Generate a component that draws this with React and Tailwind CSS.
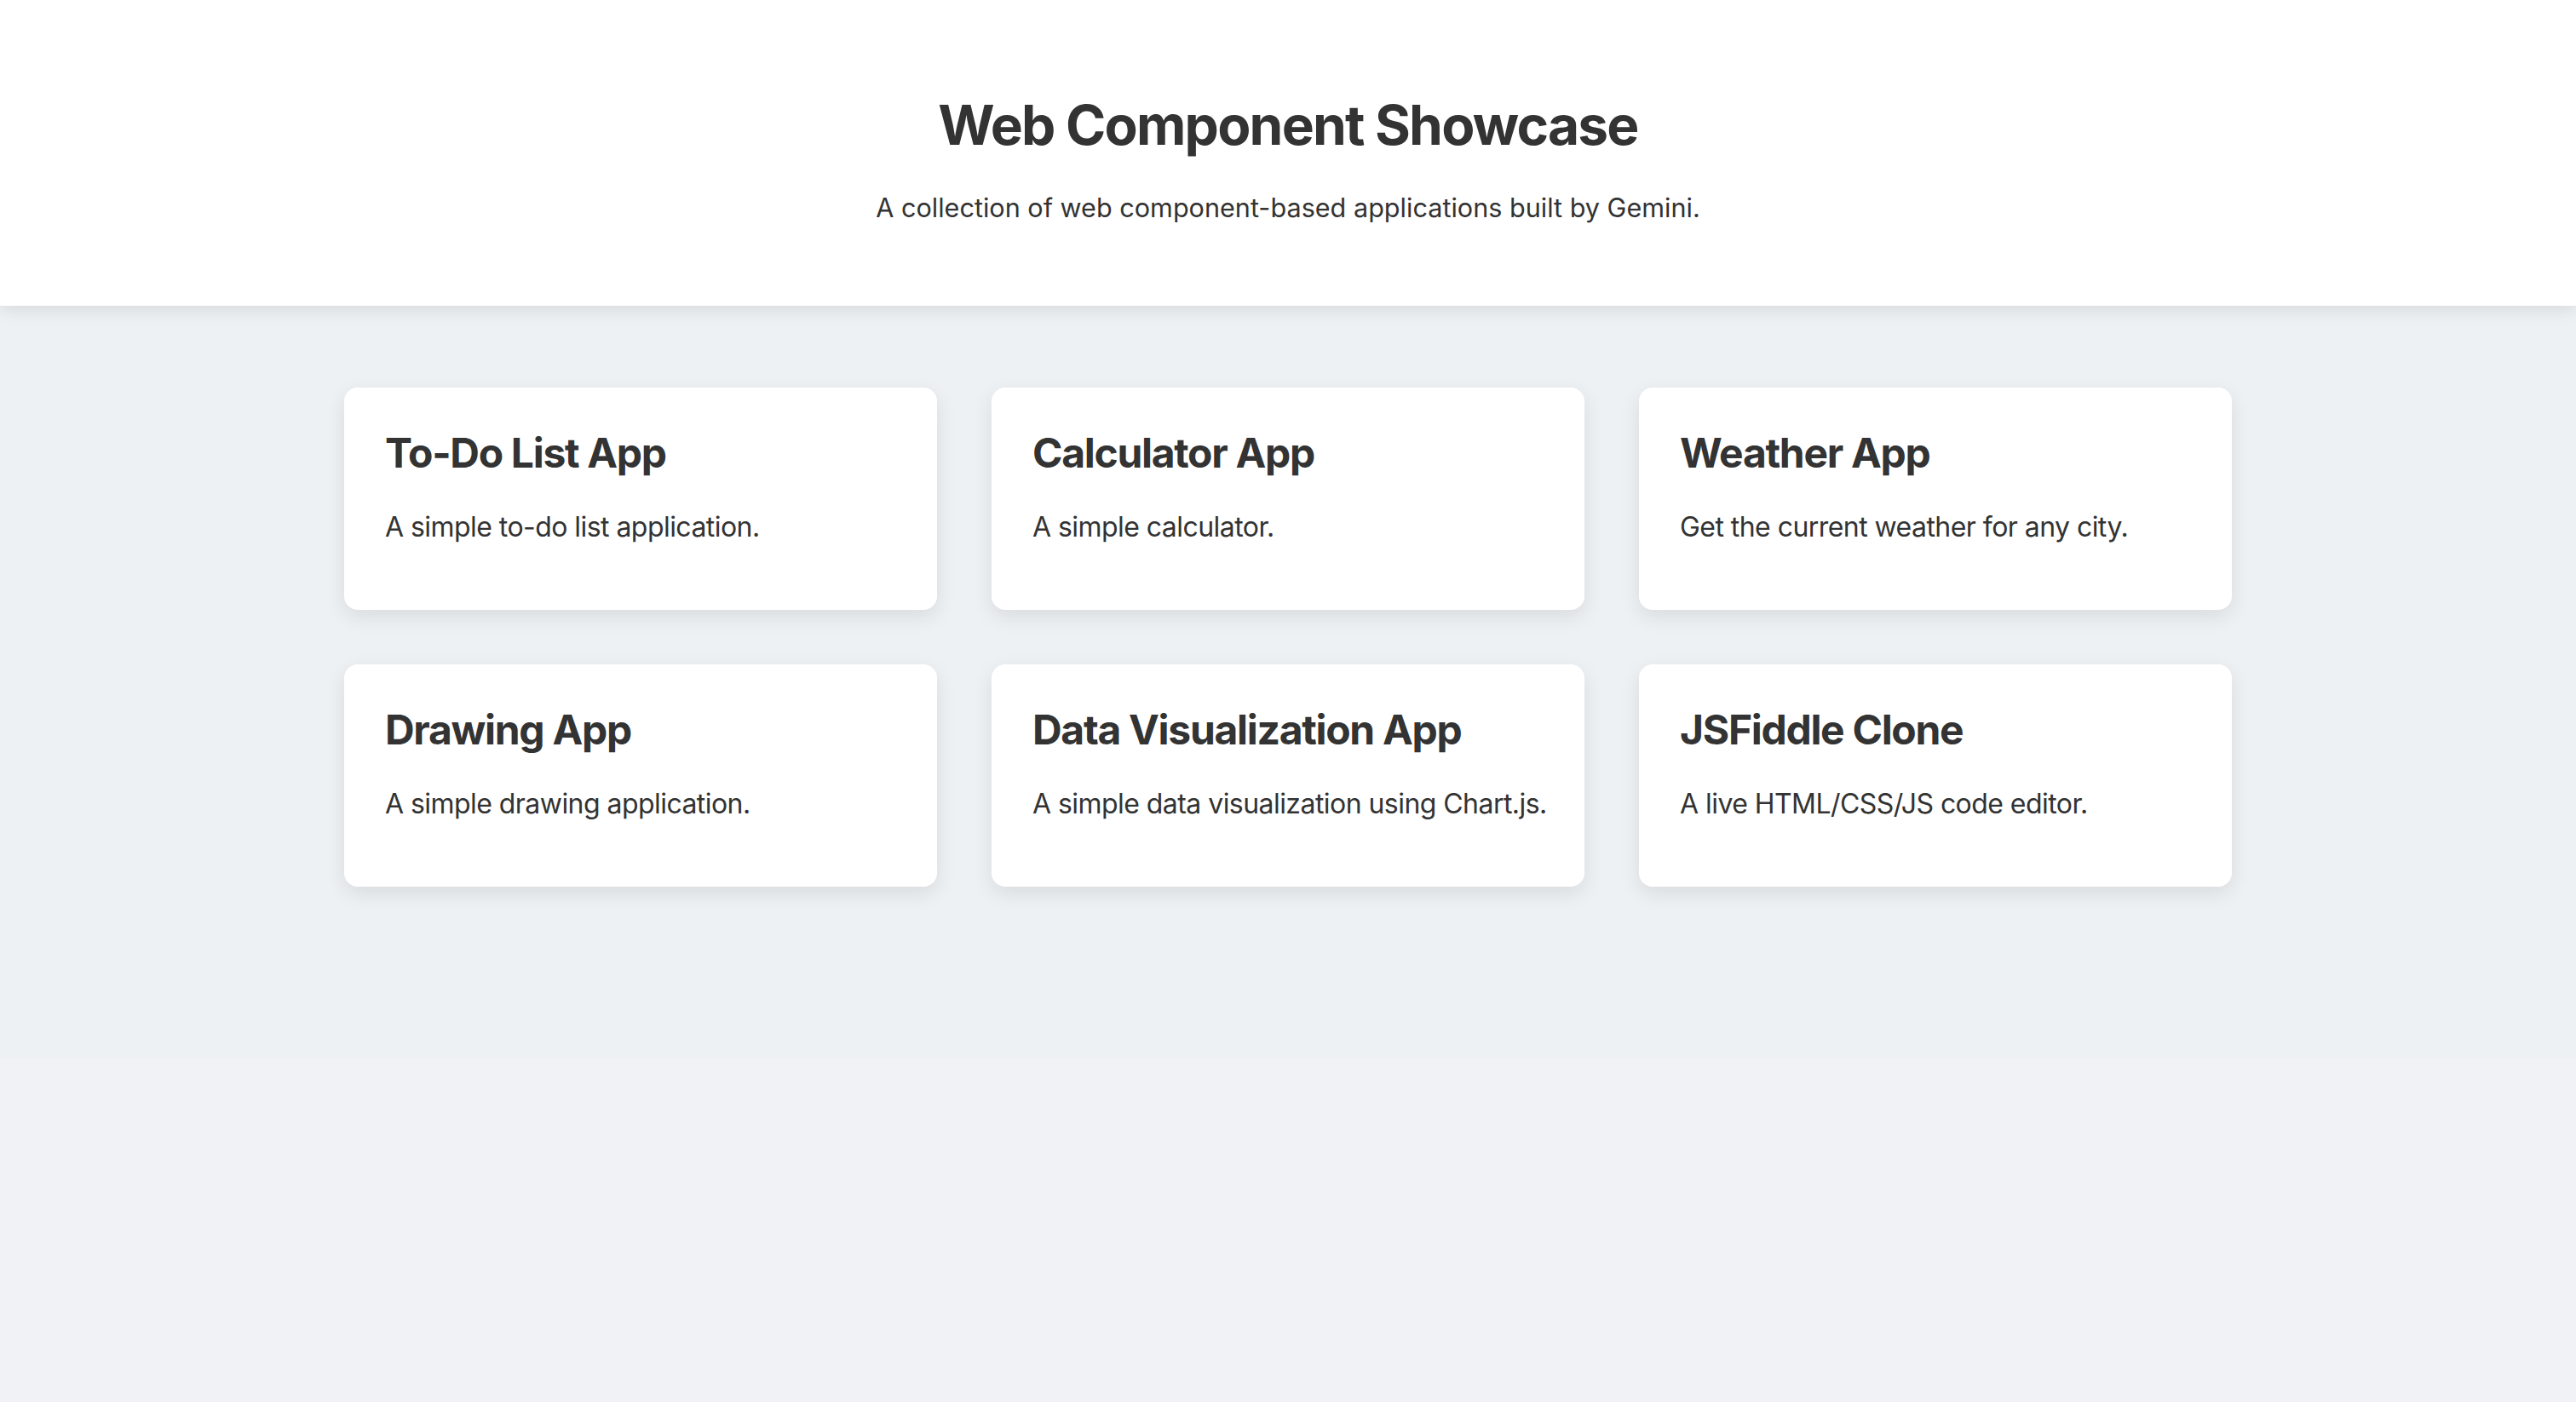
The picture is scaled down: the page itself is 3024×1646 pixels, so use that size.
import React from "react";

const apps = [
  { title: "To-Do List App", text: "A simple to-do list application." },
  { title: "Calculator App", text: "A simple calculator." },
  { title: "Weather App", text: "Get the current weather for any city." },
  { title: "Drawing App", text: "A simple drawing application." },
  { title: "Data Visualization App", text: "A simple data visualization using Chart.js." },
  { title: "JSFiddle Clone", text: "A live HTML/CSS/JS code editor." },
];

export default function App() {
  return (
    <div className="min-h-screen bg-[#f1f2f6] font-['Inter',sans-serif] text-[#333333]">
      <header className="relative z-10 bg-white pt-[108px] pb-[97px] text-center shadow-[0_4px_20px_rgba(0,0,0,0.1)]">
        <h1 className="text-[64px] font-bold leading-[77px] tracking-[-1.8px]">Web Component Showcase</h1>
        <p className="mt-[41px] text-[30.6px] leading-[36px]">
          A collection of web component-based applications built by Gemini.
        </p>
      </header>

      <main className="bg-[#eef1f4] pt-[96px] pb-[201px]">
        <div className="mx-auto grid w-[2216px] grid-cols-3 gap-[64px]">
          {apps.map((app) => (
            <AppCard key={app.title} title={app.title} text={app.text} />
          ))}
        </div>
      </main>
    </div>
  );
}

function AppCard({ title, text }) {
  return (
    <div className="rounded-[16px] bg-white p-[48px] shadow-[0_8px_24px_rgba(0,0,0,0.09)]">
      <h2 className="text-[48px] font-bold leading-[58px] tracking-[-1.3px]">{title}</h2>
      <p className="mt-[38px] mb-[30px] whitespace-nowrap text-[32px] leading-[39px] tracking-[-0.55px]">{text}</p>
    </div>
  );
}
